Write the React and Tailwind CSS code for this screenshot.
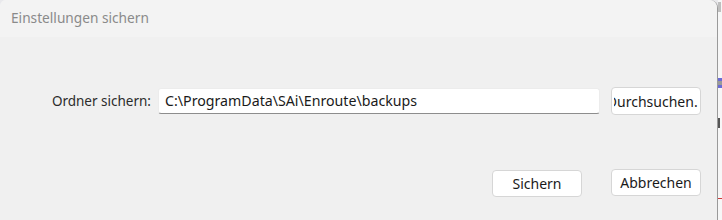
export default function App() {
  return (
    <div
      className="flex w-[722px] h-[220px] bg-[#e9e9ec] overflow-hidden"
      style={{ fontFamily: '"Noto Sans", "Open Sans", sans-serif' }}
    >
      {/* Dialog */}
      <div className="relative flex flex-col w-[718px] h-[220px] bg-[#f0f0f0] rounded-tl-[6px] rounded-tr-[8px] border-r border-[#9a9a9a]">
        <div className="flex items-center h-[37px] pl-[11px] bg-[#f3f3f3] rounded-tl-[6px] rounded-tr-[8px] text-[13.7px] text-[#8a8a8a]">
          Einstellungen sichern
        </div>

        <div className="flex items-center mt-[50px]">
          <label className="w-[158px] pr-[7px] text-right text-[13.5px] text-[#2b2b2b] whitespace-nowrap">
            Ordner sichern:
          </label>
          <div className="flex items-center w-[442px] h-[26px] px-[6px] bg-white rounded-[3px] border border-[#ececec] border-b-[#8d8d8d] text-[14.2px] text-[#1a1a1a] whitespace-nowrap">
            C:\ProgramData\SAi\Enroute\backups
          </div>
          <button className="ml-[11px] flex justify-center items-center w-[90px] h-[28px] bg-white rounded-[4px] border border-[#d6d6d6] text-[14px] text-[#1a1a1a]">
            <span className="flex justify-center w-[84px] overflow-hidden whitespace-nowrap">
              Durchsuchen...
            </span>
          </button>
        </div>

        <div className="flex justify-end items-start mt-[54px] pr-[16px] gap-[29px]">
          <button className="mt-[1px] w-[90px] h-[27px] bg-white rounded-[4px] border border-[#d6d6d6] text-[14px] text-[#1a1a1a]">
            Sichern
          </button>
          <button className="w-[90px] h-[27px] bg-white rounded-[4px] border border-[#d6d6d6] text-[14px] text-[#1a1a1a]">
            Abbrechen
          </button>
        </div>
      </div>

      {/* Window behind, right edge */}
      <div className="flex flex-col w-[4px] h-[220px] bg-[#f7f7f7]">
        <div className="h-[10px] mt-[2px] w-[3px] bg-[#bfbfbf]" />
        <div className="h-[66px]" />
        <div className="h-[3px] w-[4px] bg-[#6b6bd6]" />
        <div className="h-[4px] w-[4px] bg-[#9a9a9a]" />
        <div className="h-[3px] w-[4px] bg-[#6b6bd6]" />
        <div className="h-[30px]" />
        <div className="h-[10px] w-[2px] bg-[#555]" />
        <div className="h-[70px]" />
        <div className="h-[1px] w-[4px] bg-[#d03a3a]" />
      </div>
    </div>
  );
}
